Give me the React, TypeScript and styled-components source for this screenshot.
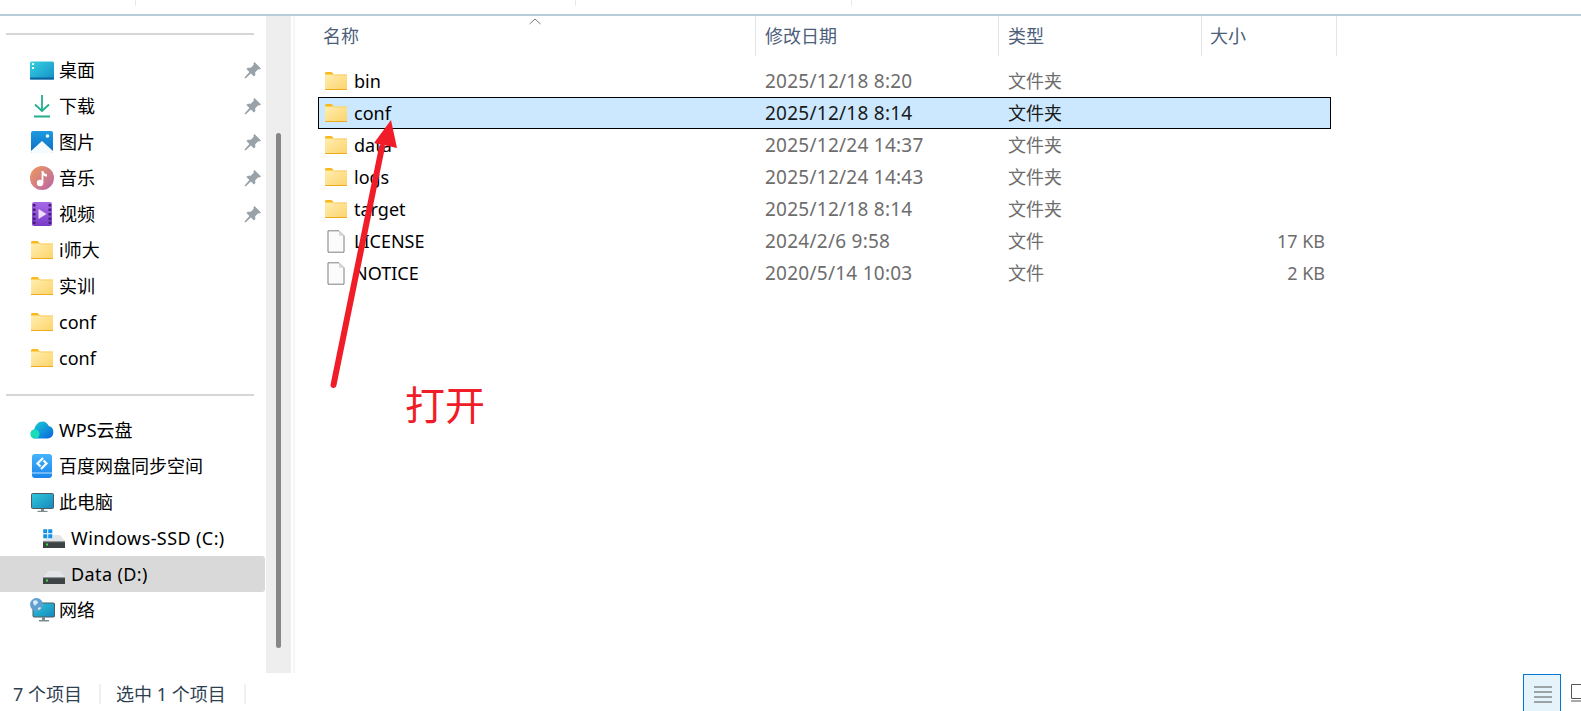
import styled, { createGlobalStyle } from "styled-components";

const GlobalStyle = createGlobalStyle`
  html, body {
    margin: 0;
    padding: 0;
    background: #fff;
  }
  body {
    font-family: "Noto Sans", "Noto Sans CJK SC", sans-serif;
    font-size: 18px;
    color: #000;
  }
`;

const FolderIcon = () => (
  <svg width="22" height="18" viewBox="0 0 22 18">
    <defs>
      <linearGradient id="folderBody" x1="0" y1="0" x2="1" y2="1">
        <stop offset="0" stopColor="#ffeeb0" />
        <stop offset="1" stopColor="#fdd36a" />
      </linearGradient>
    </defs>
    <path d="M0 1.5C0 .7.7 0 1.5 0h5l2.500 2.500v1H0z" fill="#fbb81c" />
    <rect x="0" y="2.500" width="22" height="15.500" fill="url(#folderBody)" />
    <rect x="9" y="2.500" width="13" height="1" fill="#f9cf6c" />
    <rect x="0" y="17" width="22" height="1" fill="#efab1f" />
  </svg>
);

const FileIcon = () => (
  <svg width="18" height="23" viewBox="0 0 18 23">
    <path d="M1 .8h11l5 5v16.400H1z" fill="#fbfbfb" stroke="#808080" />
    <path d="M12 .8v5h5z" fill="#d8d8d8" />
  </svg>
);

const PinIcon = () => (
  <svg width="17" height="17" viewBox="0 0 17 17">
    <path d="M10.500 0 17 6.500l-1.600 1.100-1.200-.4-3 3 .1 3-1.400 1.400-3-3L1.500 16.500.5 15.500l4.900-5.400-3-3 1.400-1.400 3 .1 3-3-.4-1.200z" fill="#98a2a8" />
  </svg>
);

const DesktopIcon = () => (
  <svg width="24" height="19" viewBox="0 0 24 19">
    <defs>
      <linearGradient id="desktopFill" x1="0" y1="0" x2="1" y2="1">
        <stop offset="0" stopColor="#35d0e0" />
        <stop offset="1" stopColor="#1590c8" />
      </linearGradient>
    </defs>
    <rect width="24" height="18" y="0.500" rx="1.500" fill="url(#desktopFill)" />
    <rect y="16.500" width="24" height="2" fill="#0f5f9c" />
    <rect x="2" y="2" width="2" height="2" fill="#e8fbff" />
    <rect x="2" y="6" width="2" height="2" fill="#e8fbff" />
  </svg>
);

const DownloadIcon = () => (
  <svg width="16" height="23" viewBox="0 0 16 23">
    <g stroke="#21b08f" strokeWidth="1.800" fill="none">
      <path d="M8 0v16" />
      <path d="M1 9.500 8 16l7-6.500" />
    </g>
    <rect x="0" y="20.500" width="16" height="2" fill="#21b08f" />
  </svg>
);

const PictureIcon = () => (
  <svg width="22" height="22" viewBox="0 0 22 22">
    <defs>
      <linearGradient id="pictureFill" x1="0" y1="0" x2="0" y2="1">
        <stop offset="0" stopColor="#1e9be0" />
        <stop offset="1" stopColor="#0c6cc0" />
      </linearGradient>
    </defs>
    <rect width="22" height="22" rx="2" fill="url(#pictureFill)" />
    <circle cx="16.500" cy="5" r="1.800" fill="#f4fbff" />
    <path d="M0 20 11 10l11 10v.500a1.500 1.500 0 0 1-1.500 1.500h-19A1.500 1.500 0 0 1 0 20.500z" fill="#f4fbff" />
  </svg>
);

const MusicIcon = () => (
  <svg width="24" height="24" viewBox="0 0 24 24">
    <defs>
      <linearGradient id="musicFill" x1="0" y1="0" x2="1" y2="1">
        <stop offset="0" stopColor="#f09a5c" />
        <stop offset="1" stopColor="#b765a8" />
      </linearGradient>
    </defs>
    <circle cx="12" cy="12" r="12" fill="url(#musicFill)" />
    <circle cx="10" cy="17" r="3.200" fill="#fff" />
    <path d="M11.600 17V5h1.800c.3 2 1.800 3 3.600 3.200V10.500c-1.500 0-2.700-.5-3.600-1.300V17z" fill="#fff" />
  </svg>
);

const VideoIcon = () => (
  <svg width="20" height="24" viewBox="0 0 20 24">
    <defs>
      <linearGradient id="videoFill" x1="0" y1="0" x2="0" y2="1">
        <stop offset="0" stopColor="#a869e8" />
        <stop offset="1" stopColor="#7a3cc8" />
      </linearGradient>
    </defs>
    <rect width="20" height="24" rx="2" fill="url(#videoFill)" />
    {[2, 6.500, 11, 15.500, 19.500].map((y) => (
      <g key={y} fill="#43206f">
        <rect x="1" y={y} width="2.500" height="2.500" />
        <rect x="16.500" y={y} width="2.500" height="2.500" />
      </g>
    ))}
    <path d="M6.500 7v10l8-5z" fill="#eee0fb" />
  </svg>
);

const WpsIcon = () => (
  <svg width="24" height="18" viewBox="0 0 24 18">
    <defs>
      <linearGradient id="wpsFill" x1="0" y1="0" x2="1" y2="1">
        <stop offset="0" stopColor="#19d6d0" />
        <stop offset="1" stopColor="#0a62e0" />
      </linearGradient>
    </defs>
    <path d="M5 17.500a4.600 4.600 0 0 1-.7-9.100C5.300 4 8.500.5 12.500.5c2.700 0 5 1.800 6 4.300A6.500 6.500 0 0 1 18 17.500z" fill="url(#wpsFill)" />
    <circle cx="5" cy="13" r="4.500" fill="#19dcb8" />
  </svg>
);

const BaiduIcon = () => (
  <svg width="20" height="24" viewBox="0 0 20 24">
    <defs>
      <linearGradient id="baiduFill" x1="0" y1="0" x2="0" y2="1">
        <stop offset="0" stopColor="#45b4fa" />
        <stop offset="1" stopColor="#1a86ec" />
      </linearGradient>
    </defs>
    <rect width="20" height="24" rx="3" fill="url(#baiduFill)" />
    <rect y="18.500" width="20" height="1" fill="#bfe3ff" />
    <g fill="none" stroke="#fff" strokeWidth="2.200">
      <path d="M11 4 5.500 9.500l3 3" />
      <path d="M9 15l5.500-5.500-3-3" />
    </g>
  </svg>
);

const MonitorIcon = () => (
  <svg width="23" height="19" viewBox="0 0 23 19">
    <defs>
      <linearGradient id="monitorFill" x1="0" y1="0" x2="1" y2="1">
        <stop offset="0" stopColor="#30c8dc" />
        <stop offset="1" stopColor="#1688bd" />
      </linearGradient>
    </defs>
    <rect x="0.500" y="0.500" width="22" height="15" rx="1" fill="url(#monitorFill)" stroke="#4d5a60" />
    <rect x="10" y="16" width="3" height="2" fill="#7d8b90" />
    <rect x="6.500" y="17.800" width="10" height="1.200" fill="#7d8b90" />
  </svg>
);

const DriveIcon = ({ windows }: { windows?: boolean }) => (
  <svg width="22" height="19" viewBox="0 0 22 19">
    <path d="M0 12 5 6h12l5 6z" fill="#e3e5e8" />
    {windows && (
      <g fill="#1590e8" stroke="#fff" strokeWidth="0.500">
        <rect x="0" y="0" width="4.500" height="4.500" />
        <rect x="5" y="0" width="4.500" height="4.500" />
        <rect x="0" y="5" width="4.500" height="4.500" />
        <rect x="5" y="5" width="4.500" height="4.500" />
      </g>
    )}
    <rect x="0" y="12" width="22" height="7" fill="#3d4244" />
    <rect x="0" y="12" width="22" height="1.200" fill="#8b9094" />
    <rect x="3" y="14.500" width="2" height="2" fill="#3fe03f" />
  </svg>
);

const NetworkIcon = () => (
  <svg width="25" height="24" viewBox="0 0 25 24">
    <defs>
      <linearGradient id="networkFill" x1="0" y1="0" x2="1" y2="1">
        <stop offset="0" stopColor="#30c8dc" />
        <stop offset="1" stopColor="#1688bd" />
      </linearGradient>
    </defs>
    <rect x="3" y="5" width="21.500" height="14" rx="1" fill="url(#networkFill)" stroke="#4d5a60" />
    <rect x="12" y="19" width="3" height="3" fill="#7d8b90" />
    <rect x="9" y="22" width="10" height="1.500" fill="#7d8b90" />
    <circle cx="6.500" cy="6.500" r="6.500" fill="#5f9fd0" />
    <path d="M3 3c2-1 4-1 5 1 0 2-2 2-3 4-1-1-2-2-2-5zM8 10c1-1 3-1 3 0s-2 2-3 2z" fill="#d8e8f2" />
  </svg>
);

const Page = styled.div`
  position: relative;
  width: 1581px;
  height: 711px;
  display: flex;
  flex-direction: column;
  overflow: hidden;
  background: #fff;
`;

const TopBar = styled.div`
  height: 14px;
  flex: none;
  display: flex;
  border-bottom: 2px solid #b9cdd9;
`;

const TopCell = styled.div<{ $width: number }>`
  width: ${(p) => p.$width}px;
  height: 6px;
  box-sizing: border-box;
  border-right: 1px solid #e9e9e9;
`;

const Main = styled.div`
  height: 657px;
  flex: none;
  display: flex;
`;

const Sidebar = styled.nav`
  width: 266px;
  flex: none;
  padding-top: 17px;
  box-sizing: border-box;
`;

const SideRule = styled.div<{ $gap: number }>`
  width: 248px;
  height: 2px;
  margin: 0 0 ${(p) => p.$gap}px 6px;
  background: #d6d6d6;
`;

const SideGroup = styled.div`
  margin-bottom: 18px;
`;

const PlacesRule = styled(SideRule)`
  margin-bottom: 16px;
`;

const SideRow = styled.div<{ $nested?: boolean; $active?: boolean }>`
  height: 36px;
  width: 265px;
  box-sizing: border-box;
  padding: 0 4px 0 ${(p) => (p.$nested ? 43 : 30)}px;
  display: flex;
  align-items: center;
  border-radius: 0 3px 3px 0;
  background: ${(p) => (p.$active ? "#d9d9d9" : "transparent")};
`;

const SideIconBox = styled.span<{ $nested?: boolean; $inset?: number }>`
  width: ${(p) => (p.$nested ? 28 : 29)}px;
  box-sizing: border-box;
  padding-left: ${(p) => p.$inset ?? 0}px;
  flex: none;
  display: flex;
  align-items: center;

  svg {
    display: block;
  }
`;

const SideLabel = styled.span<{ $nested?: boolean }>`
  flex: 1;
  white-space: nowrap;
  line-height: 24px;
  letter-spacing: ${(p) => (p.$nested ? "0.4px" : "0")};
`;

const PinBox = styled.span`
  display: flex;
`;

const ScrollTrack = styled.div`
  width: 25px;
  flex: none;
  background: #eeeeee;
  padding-top: 117px;
  box-sizing: border-box;
  display: flex;
  justify-content: center;
`;

const ScrollThumb = styled.div`
  width: 5px;
  height: 515px;
  border-radius: 3px;
  background: #868686;
`;

const ThinLine = styled.div`
  width: 2px;
  flex: none;
  margin-left: 2px;
  background: #f6f6f6;
`;

const FileArea = styled.section`
  flex: 1;
  min-width: 0;
`;

const HeaderRow = styled.div`
  height: 40px;
  display: flex;
  color: #4c607a;
`;

const HeaderCell = styled.div<{ $width: number; $pad: number }>`
  position: relative;
  width: ${(p) => p.$width}px;
  box-sizing: border-box;
  padding: 1px 0 0 ${(p) => p.$pad}px;
  border-right: 1px solid #e5e5e5;
  line-height: 39px;
`;

const SortCaret = styled.svg`
  position: absolute;
  left: 234px;
  top: 2px;
`;

const FileList = styled.div`
  margin: 9px 0 0 23px;
  width: 1013px;
`;

const FileRow = styled.div<{ $selected?: boolean }>`
  height: 32px;
  box-sizing: border-box;
  display: grid;
  grid-template-columns: 438px 243px 203px 1fr;
  align-items: center;
  color: ${(p) => (p.$selected ? "#1a1a1a" : "#6d6d6d")};
  border: 1px solid ${(p) => (p.$selected ? "#000" : "transparent")};
  background: ${(p) => (p.$selected ? "#cce8ff" : "transparent")};
`;

const NameCell = styled.div`
  display: flex;
  align-items: center;
  padding-left: 6px;
  color: #000;
`;

const NameIcon = styled.span`
  width: 29px;
  box-sizing: border-box;
  flex: none;
  display: flex;
  justify-content: flex-start;

  svg {
    display: block;
  }
`;

const FileIconBox = styled(NameIcon)`
  padding-left: 2px;
`;

const DateCell = styled.div`
  padding-left: 8px;
  white-space: nowrap;
  font-size: 19px;
  letter-spacing: 0.25px;
`;

const TypeCell = styled.div`
  padding: 0 0 2px 8px;
`;

const SizeCell = styled.div`
  text-align: right;
  padding-right: 5px;
`;

const StatusBar = styled.footer`
  flex: 1;
  display: flex;
  align-items: center;
  color: #2f3f52;
  padding-left: 13px;
  position: relative;
`;

const StatusText = styled.span<{ $width: number }>`
  width: ${(p) => p.$width}px;
  box-sizing: border-box;
  height: 20px;
  line-height: 20px;
  border-right: 2px solid #f0f0f0;
  white-space: nowrap;
`;

const StatusSelected = styled(StatusText)`
  padding-left: 15px;
`;

const ViewButtons = styled.div`
  margin-left: auto;
  align-self: flex-start;
  display: flex;
  padding-top: 1px;
`;

const ListViewButton = styled.div`
  width: 38px;
  height: 40px;
  box-sizing: border-box;
  border: 1px solid #0078d4;
  background: #e5f3fb;
  padding: 11px 0 0 10px;
  margin-right: 10px;

  svg {
    display: block;
  }
`;

const TileViewButton = styled.div`
  width: 10px;
  padding-top: 10px;

  svg {
    display: block;
  }
`;

const Annotation = styled.svg`
  position: absolute;
  left: 0;
  top: 0;
  pointer-events: none;
`;

const AnnotationLabel = styled.div`
  position: absolute;
  left: 405px;
  top: 374px;
  font-size: 40px;
  line-height: 58px;
  color: #f01c28;
  font-family: "Noto Sans CJK SC", sans-serif;
  font-weight: 400;
`;

type SideItem = {
  label: string;
  icon: React.ReactNode;
  inset?: number;
  pinned?: boolean;
  nested?: boolean;
  active?: boolean;
};

const quickAccess: SideItem[] = [
  { label: "桌面", icon: <DesktopIcon />, pinned: true },
  { label: "下载", icon: <DownloadIcon />, inset: 4, pinned: true },
  { label: "图片", icon: <PictureIcon />, inset: 1, pinned: true },
  { label: "音乐", icon: <MusicIcon />, pinned: true },
  { label: "视频", icon: <VideoIcon />, inset: 2, pinned: true },
  { label: "i师大", icon: <FolderIcon />, inset: 1 },
  { label: "实训", icon: <FolderIcon />, inset: 1 },
  { label: "conf", icon: <FolderIcon />, inset: 1 },
  { label: "conf", icon: <FolderIcon />, inset: 1 },
];

const places: SideItem[] = [
  { label: "WPS云盘", icon: <WpsIcon /> },
  { label: "百度网盘同步空间", icon: <BaiduIcon />, inset: 2 },
  { label: "此电脑", icon: <MonitorIcon />, inset: 1 },
  { label: "Windows-SSD (C:)", icon: <DriveIcon windows />, nested: true },
  { label: "Data (D:)", icon: <DriveIcon />, nested: true, active: true },
  { label: "网络", icon: <NetworkIcon /> },
];

const files = [
  { name: "bin", date: "2025/12/18 8:20", type: "文件夹", size: "", folder: true },
  { name: "conf", date: "2025/12/18 8:14", type: "文件夹", size: "", folder: true, selected: true },
  { name: "data", date: "2025/12/24 14:37", type: "文件夹", size: "", folder: true },
  { name: "logs", date: "2025/12/24 14:43", type: "文件夹", size: "", folder: true },
  { name: "target", date: "2025/12/18 8:14", type: "文件夹", size: "", folder: true },
  { name: "LICENSE", date: "2024/2/6 9:58", type: "文件", size: "17 KB" },
  { name: "NOTICE", date: "2020/5/14 10:03", type: "文件", size: "2 KB" },
];

const renderSideRow = (item: SideItem, index: number) => (
  <SideRow key={index} $nested={item.nested} $active={item.active}>
    <SideIconBox $nested={item.nested} $inset={item.inset}>{item.icon}</SideIconBox>
    <SideLabel $nested={item.nested}>{item.label}</SideLabel>
    {item.pinned && (
      <PinBox>
        <PinIcon />
      </PinBox>
    )}
  </SideRow>
);

const App = () => {
  return (
    <Page>
      <GlobalStyle />
      <TopBar>
        <TopCell $width={136} />
        <TopCell $width={440} />
        <TopCell $width={276} />
      </TopBar>
      <Main>
        <Sidebar>
          <SideRule $gap={17} />
          <SideGroup>{quickAccess.map(renderSideRow)}</SideGroup>
          <PlacesRule $gap={16} />
          {places.map(renderSideRow)}
        </Sidebar>
        <ScrollTrack>
          <ScrollThumb />
        </ScrollTrack>
        <ThinLine />
        <FileArea>
          <HeaderRow>
            <HeaderCell $width={461} $pad={28}>
              名称
              <SortCaret width="12" height="7" viewBox="0 0 12 7">
                <path d="M.5 6 6 1l5.500 5" fill="none" stroke="#7a7a7a" />
              </SortCaret>
            </HeaderCell>
            <HeaderCell $width={243} $pad={9}>修改日期</HeaderCell>
            <HeaderCell $width={203} $pad={9}>类型</HeaderCell>
            <HeaderCell $width={135} $pad={8}>大小</HeaderCell>
          </HeaderRow>
          <FileList>
            {files.map((f) => (
              <FileRow key={f.name} $selected={f.selected}>
                <NameCell>
                  {f.folder ? (
                    <NameIcon>
                      <FolderIcon />
                    </NameIcon>
                  ) : (
                    <FileIconBox>
                      <FileIcon />
                    </FileIconBox>
                  )}
                  {f.name}
                </NameCell>
                <DateCell>{f.date}</DateCell>
                <TypeCell>{f.type}</TypeCell>
                <SizeCell>{f.size}</SizeCell>
              </FileRow>
            ))}
          </FileList>
        </FileArea>
      </Main>
      <StatusBar>
        <StatusText $width={88}>7 个项目</StatusText>
        <StatusSelected $width={145}>选中 1 个项目</StatusSelected>
        <ViewButtons>
          <ListViewButton>
            <svg width="18" height="17" viewBox="0 0 18 17">
              <path d="M0 1h18M0 6h18M0 11h18M0 16h18" stroke="#555" strokeWidth="1" />
            </svg>
          </ListViewButton>
          <TileViewButton>
            <svg width="10" height="18" viewBox="0 0 10 18">
              <path d="M10 .5H.5v14H10M0 17h10" fill="none" stroke="#555" />
            </svg>
          </TileViewButton>
        </ViewButtons>
      </StatusBar>
      <Annotation width="1581" height="711" viewBox="0 0 1581 711">
        <path d="M333.500 385 382 147" stroke="#f01c28" strokeWidth="6" strokeLinecap="round" fill="none" />
        <path d="M391 120 374 143 397 148z" fill="#f01c28" />
      </Annotation>
      <AnnotationLabel>打开</AnnotationLabel>
    </Page>
  );
};

export default App;
